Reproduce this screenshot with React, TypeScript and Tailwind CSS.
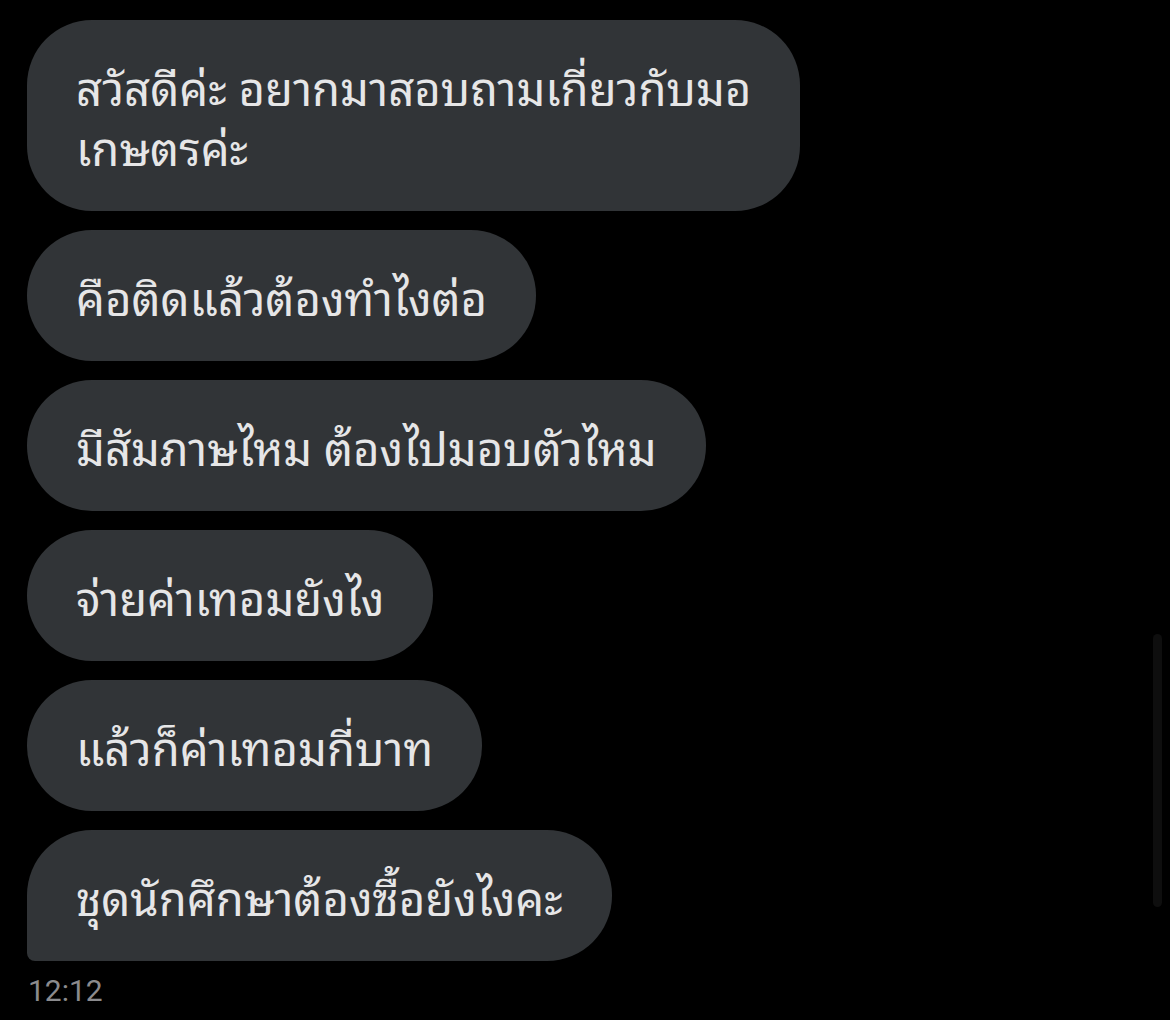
const messages = [
  ["สวัสดีค่ะ อยากมาสอบถามเกี่ยวกับมอ", "เกษตรค่ะ"],
  ["คือติดแล้วต้องทำไงต่อ"],
  ["มีสัมภาษไหม ต้องไปมอบตัวไหม"],
  ["จ่ายค่าเทอมยังไง"],
  ["แล้วก็ค่าเทอมกี่บาท"],
  ["ชุดนักศึกษาต้องซื้อยังไงคะ"],
];

export default function App() {
  return (
    <div className="relative min-h-[1020px] bg-black font-['Noto_Sans_Thai_Looped','Noto_Looped_Thai','Loma','Garuda','Sarabun','Noto_Sans_Thai','Noto_Sans',sans-serif]">
      <div className="flex flex-col items-start gap-[19px] pl-[27px] pt-[20px]">
        {messages.map((lines, i) => {
          const last = i === messages.length - 1;
          return (
            <div
              key={i}
              className={
                last
                  ? "rounded-[65px] rounded-bl-[8px] bg-[#313437] px-[49px] py-[35.5px] text-[45.5px] leading-[60px] text-[#e6e6e7]"
                  : "rounded-[65px] bg-[#313437] px-[49px] py-[35.5px] text-[45.5px] leading-[60px] text-[#e6e6e7]"
              }
            >
              {lines.map((line, j) => (
                <div key={j} className="whitespace-nowrap">
                  {line}
                </div>
              ))}
            </div>
          );
        })}
        <div className="mt-[-7px] pl-[1px] font-['Roboto',sans-serif] text-[30px] leading-[36px] text-[#8b8b8e]">
          12:12
        </div>
      </div>
      <div className="absolute right-[8px] top-[634px] h-[273px] w-[9px] rounded-full bg-[#0e0e0e]" />
    </div>
  );
}
